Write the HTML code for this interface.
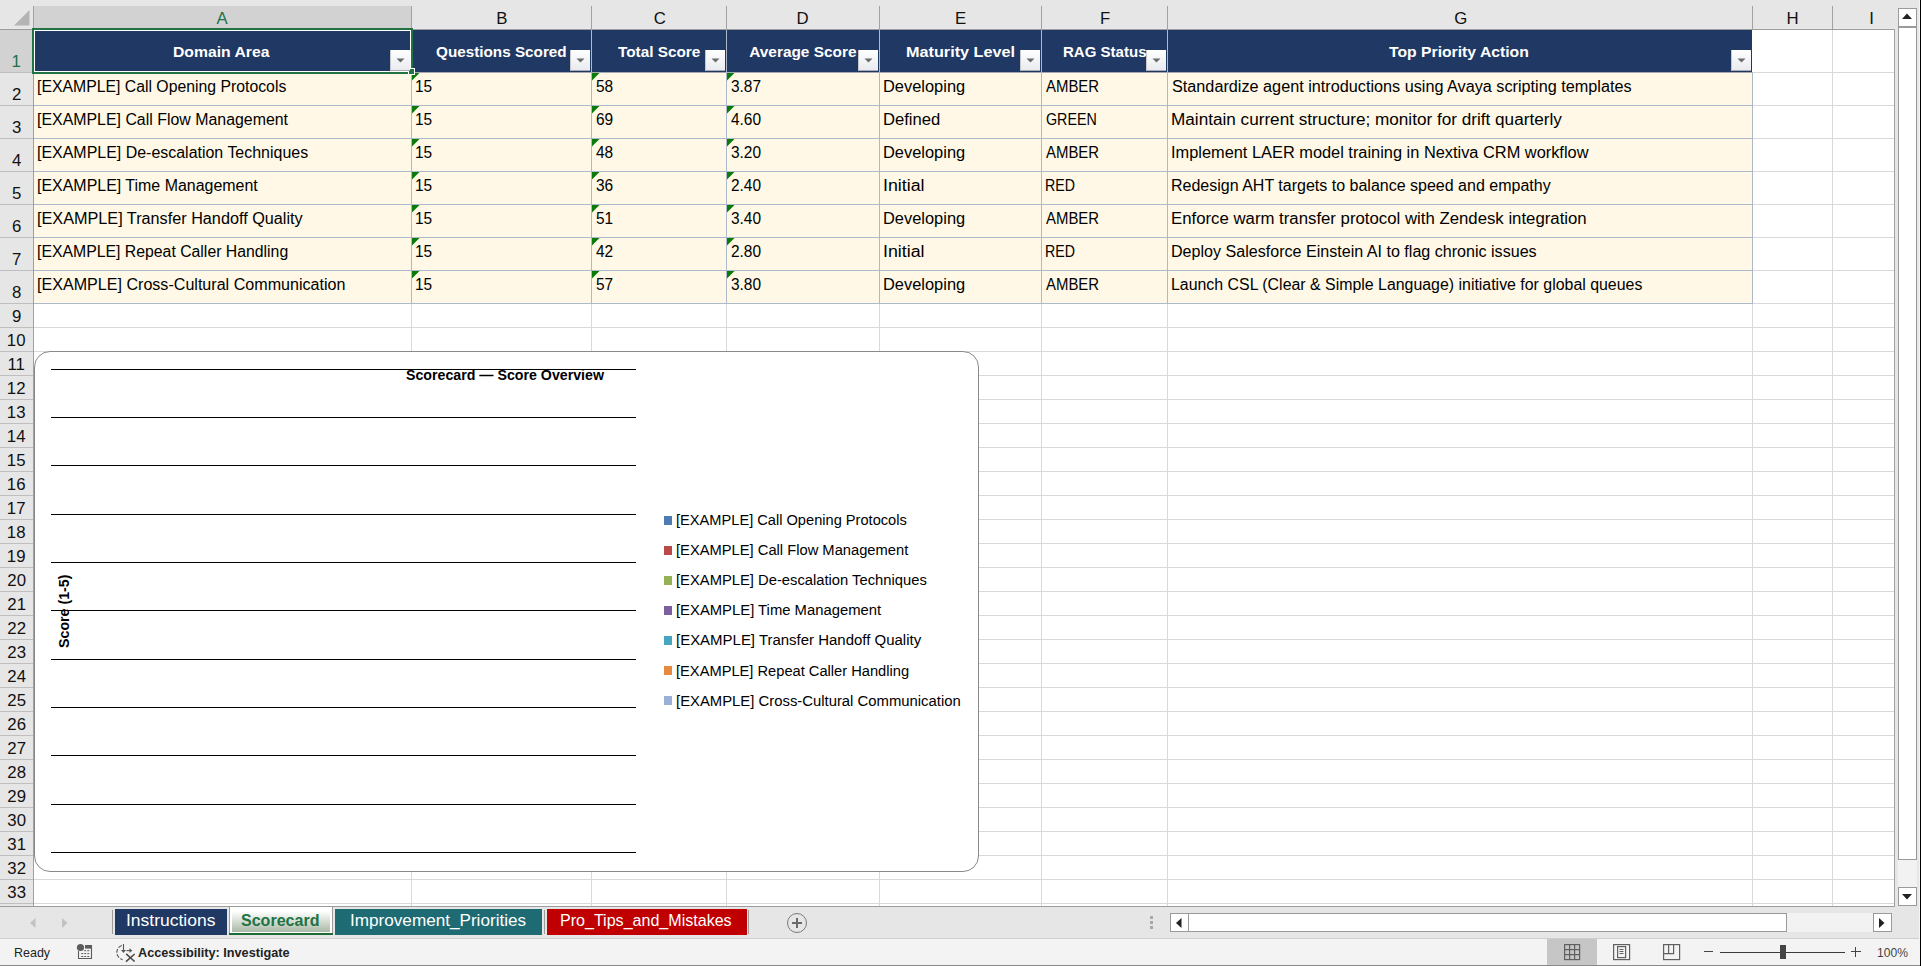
<!DOCTYPE html>
<html><head><meta charset="utf-8"><style>
html,body{margin:0;padding:0;width:1921px;height:966px;overflow:hidden;position:relative;background:#fff}
body{font-family:"Liberation Sans", sans-serif}
.t{position:absolute;white-space:nowrap;line-height:1;transform-origin:0 0}
</style></head><body>
<div style="position:absolute;left:0px;top:0px;width:1921px;height:966px;background:#ffffff;"></div>
<div style="position:absolute;left:0px;top:0px;width:1895px;height:29px;background:#e6e6e6;"></div>
<svg style="position:absolute;left:0;top:0" width="33" height="29"><polygon points="29.5,10 29.5,25.5 14,25.5" fill="#b4b4b4"/></svg>
<div style="position:absolute;left:34px;top:6px;width:377px;height:23px;background:#d2d2d2;"></div>
<div style="position:absolute;left:0px;top:28px;width:1895px;height:1px;background:#e9e9e9;"></div>
<div style="position:absolute;left:0px;top:29px;width:1895px;height:1px;background:#9c9c9c;"></div>
<div style="position:absolute;left:411px;top:6px;width:1px;height:23px;background:#a2a2a2;"></div>
<div style="position:absolute;left:591px;top:6px;width:1px;height:23px;background:#a2a2a2;"></div>
<div style="position:absolute;left:726px;top:6px;width:1px;height:23px;background:#a2a2a2;"></div>
<div style="position:absolute;left:879px;top:6px;width:1px;height:23px;background:#a2a2a2;"></div>
<div style="position:absolute;left:1041px;top:6px;width:1px;height:23px;background:#a2a2a2;"></div>
<div style="position:absolute;left:1167px;top:6px;width:1px;height:23px;background:#a2a2a2;"></div>
<div style="position:absolute;left:1752px;top:6px;width:1px;height:23px;background:#a2a2a2;"></div>
<div style="position:absolute;left:1832px;top:6px;width:1px;height:23px;background:#a2a2a2;"></div>
<div style="position:absolute;left:33px;top:6px;width:1px;height:23px;background:#a2a2a2;"></div>
<div style="position:absolute;left:0px;top:30px;width:33px;height:876px;background:#e6e6e6;"></div>
<div style="position:absolute;left:0px;top:30px;width:33px;height:42px;background:#d2d2d2;"></div>
<div style="position:absolute;left:33px;top:29px;width:1px;height:877px;background:#a0a0a0;"></div>
<div style="position:absolute;left:0px;top:72px;width:33px;height:1px;background:#bfbfbf;"></div>
<div style="position:absolute;left:0px;top:105px;width:33px;height:1px;background:#bfbfbf;"></div>
<div style="position:absolute;left:0px;top:138px;width:33px;height:1px;background:#bfbfbf;"></div>
<div style="position:absolute;left:0px;top:171px;width:33px;height:1px;background:#bfbfbf;"></div>
<div style="position:absolute;left:0px;top:204px;width:33px;height:1px;background:#bfbfbf;"></div>
<div style="position:absolute;left:0px;top:237px;width:33px;height:1px;background:#bfbfbf;"></div>
<div style="position:absolute;left:0px;top:270px;width:33px;height:1px;background:#bfbfbf;"></div>
<div style="position:absolute;left:0px;top:303px;width:33px;height:1px;background:#bfbfbf;"></div>
<div style="position:absolute;left:0px;top:327px;width:33px;height:1px;background:#bfbfbf;"></div>
<div style="position:absolute;left:0px;top:351px;width:33px;height:1px;background:#bfbfbf;"></div>
<div style="position:absolute;left:0px;top:375px;width:33px;height:1px;background:#bfbfbf;"></div>
<div style="position:absolute;left:0px;top:399px;width:33px;height:1px;background:#bfbfbf;"></div>
<div style="position:absolute;left:0px;top:423px;width:33px;height:1px;background:#bfbfbf;"></div>
<div style="position:absolute;left:0px;top:447px;width:33px;height:1px;background:#bfbfbf;"></div>
<div style="position:absolute;left:0px;top:471px;width:33px;height:1px;background:#bfbfbf;"></div>
<div style="position:absolute;left:0px;top:495px;width:33px;height:1px;background:#bfbfbf;"></div>
<div style="position:absolute;left:0px;top:519px;width:33px;height:1px;background:#bfbfbf;"></div>
<div style="position:absolute;left:0px;top:543px;width:33px;height:1px;background:#bfbfbf;"></div>
<div style="position:absolute;left:0px;top:567px;width:33px;height:1px;background:#bfbfbf;"></div>
<div style="position:absolute;left:0px;top:591px;width:33px;height:1px;background:#bfbfbf;"></div>
<div style="position:absolute;left:0px;top:615px;width:33px;height:1px;background:#bfbfbf;"></div>
<div style="position:absolute;left:0px;top:639px;width:33px;height:1px;background:#bfbfbf;"></div>
<div style="position:absolute;left:0px;top:663px;width:33px;height:1px;background:#bfbfbf;"></div>
<div style="position:absolute;left:0px;top:687px;width:33px;height:1px;background:#bfbfbf;"></div>
<div style="position:absolute;left:0px;top:711px;width:33px;height:1px;background:#bfbfbf;"></div>
<div style="position:absolute;left:0px;top:735px;width:33px;height:1px;background:#bfbfbf;"></div>
<div style="position:absolute;left:0px;top:759px;width:33px;height:1px;background:#bfbfbf;"></div>
<div style="position:absolute;left:0px;top:783px;width:33px;height:1px;background:#bfbfbf;"></div>
<div style="position:absolute;left:0px;top:807px;width:33px;height:1px;background:#bfbfbf;"></div>
<div style="position:absolute;left:0px;top:831px;width:33px;height:1px;background:#bfbfbf;"></div>
<div style="position:absolute;left:0px;top:855px;width:33px;height:1px;background:#bfbfbf;"></div>
<div style="position:absolute;left:0px;top:879px;width:33px;height:1px;background:#bfbfbf;"></div>
<div style="position:absolute;left:0px;top:903px;width:33px;height:1px;background:#bfbfbf;"></div>
<div style="position:absolute;left:34px;top:303px;width:1860px;height:1px;background:#d9d9d9;"></div>
<div style="position:absolute;left:34px;top:327px;width:1860px;height:1px;background:#d9d9d9;"></div>
<div style="position:absolute;left:34px;top:351px;width:1860px;height:1px;background:#d9d9d9;"></div>
<div style="position:absolute;left:34px;top:375px;width:1860px;height:1px;background:#d9d9d9;"></div>
<div style="position:absolute;left:34px;top:399px;width:1860px;height:1px;background:#d9d9d9;"></div>
<div style="position:absolute;left:34px;top:423px;width:1860px;height:1px;background:#d9d9d9;"></div>
<div style="position:absolute;left:34px;top:447px;width:1860px;height:1px;background:#d9d9d9;"></div>
<div style="position:absolute;left:34px;top:471px;width:1860px;height:1px;background:#d9d9d9;"></div>
<div style="position:absolute;left:34px;top:495px;width:1860px;height:1px;background:#d9d9d9;"></div>
<div style="position:absolute;left:34px;top:519px;width:1860px;height:1px;background:#d9d9d9;"></div>
<div style="position:absolute;left:34px;top:543px;width:1860px;height:1px;background:#d9d9d9;"></div>
<div style="position:absolute;left:34px;top:567px;width:1860px;height:1px;background:#d9d9d9;"></div>
<div style="position:absolute;left:34px;top:591px;width:1860px;height:1px;background:#d9d9d9;"></div>
<div style="position:absolute;left:34px;top:615px;width:1860px;height:1px;background:#d9d9d9;"></div>
<div style="position:absolute;left:34px;top:639px;width:1860px;height:1px;background:#d9d9d9;"></div>
<div style="position:absolute;left:34px;top:663px;width:1860px;height:1px;background:#d9d9d9;"></div>
<div style="position:absolute;left:34px;top:687px;width:1860px;height:1px;background:#d9d9d9;"></div>
<div style="position:absolute;left:34px;top:711px;width:1860px;height:1px;background:#d9d9d9;"></div>
<div style="position:absolute;left:34px;top:735px;width:1860px;height:1px;background:#d9d9d9;"></div>
<div style="position:absolute;left:34px;top:759px;width:1860px;height:1px;background:#d9d9d9;"></div>
<div style="position:absolute;left:34px;top:783px;width:1860px;height:1px;background:#d9d9d9;"></div>
<div style="position:absolute;left:34px;top:807px;width:1860px;height:1px;background:#d9d9d9;"></div>
<div style="position:absolute;left:34px;top:831px;width:1860px;height:1px;background:#d9d9d9;"></div>
<div style="position:absolute;left:34px;top:855px;width:1860px;height:1px;background:#d9d9d9;"></div>
<div style="position:absolute;left:34px;top:879px;width:1860px;height:1px;background:#d9d9d9;"></div>
<div style="position:absolute;left:34px;top:903px;width:1860px;height:1px;background:#d9d9d9;"></div>
<div style="position:absolute;left:411px;top:304px;width:1px;height:602px;background:#d9d9d9;"></div>
<div style="position:absolute;left:591px;top:304px;width:1px;height:602px;background:#d9d9d9;"></div>
<div style="position:absolute;left:726px;top:304px;width:1px;height:602px;background:#d9d9d9;"></div>
<div style="position:absolute;left:879px;top:304px;width:1px;height:602px;background:#d9d9d9;"></div>
<div style="position:absolute;left:1041px;top:304px;width:1px;height:602px;background:#d9d9d9;"></div>
<div style="position:absolute;left:1167px;top:304px;width:1px;height:602px;background:#d9d9d9;"></div>
<div style="position:absolute;left:1752px;top:304px;width:1px;height:602px;background:#d9d9d9;"></div>
<div style="position:absolute;left:1832px;top:304px;width:1px;height:602px;background:#d9d9d9;"></div>
<div style="position:absolute;left:1753px;top:72px;width:141px;height:1px;background:#d9d9d9;"></div>
<div style="position:absolute;left:1753px;top:105px;width:141px;height:1px;background:#d9d9d9;"></div>
<div style="position:absolute;left:1753px;top:138px;width:141px;height:1px;background:#d9d9d9;"></div>
<div style="position:absolute;left:1753px;top:171px;width:141px;height:1px;background:#d9d9d9;"></div>
<div style="position:absolute;left:1753px;top:204px;width:141px;height:1px;background:#d9d9d9;"></div>
<div style="position:absolute;left:1753px;top:237px;width:141px;height:1px;background:#d9d9d9;"></div>
<div style="position:absolute;left:1753px;top:270px;width:141px;height:1px;background:#d9d9d9;"></div>
<div style="position:absolute;left:1753px;top:303px;width:141px;height:1px;background:#d9d9d9;"></div>
<div style="position:absolute;left:1832px;top:30px;width:1px;height:274px;background:#d9d9d9;"></div>
<div style="position:absolute;left:1894px;top:29px;width:1px;height:877px;background:#a0a0a0;"></div>
<div style="position:absolute;left:34px;top:30px;width:1718px;height:42px;background:#203864;"></div>
<div style="position:absolute;left:591px;top:30px;width:1px;height:42px;background:#aeb8c9;"></div>
<div style="position:absolute;left:726px;top:30px;width:1px;height:42px;background:#aeb8c9;"></div>
<div style="position:absolute;left:879px;top:30px;width:1px;height:42px;background:#aeb8c9;"></div>
<div style="position:absolute;left:1041px;top:30px;width:1px;height:42px;background:#aeb8c9;"></div>
<div style="position:absolute;left:1167px;top:30px;width:1px;height:42px;background:#aeb8c9;"></div>
<div style="position:absolute;left:34px;top:73px;width:1718px;height:230px;background:#fff8e6;"></div>
<div style="position:absolute;left:34px;top:72px;width:1719px;height:1px;background:#acb9ca;"></div>
<div style="position:absolute;left:34px;top:105px;width:1719px;height:1px;background:#acb9ca;"></div>
<div style="position:absolute;left:34px;top:138px;width:1719px;height:1px;background:#acb9ca;"></div>
<div style="position:absolute;left:34px;top:171px;width:1719px;height:1px;background:#acb9ca;"></div>
<div style="position:absolute;left:34px;top:204px;width:1719px;height:1px;background:#acb9ca;"></div>
<div style="position:absolute;left:34px;top:237px;width:1719px;height:1px;background:#acb9ca;"></div>
<div style="position:absolute;left:34px;top:270px;width:1719px;height:1px;background:#acb9ca;"></div>
<div style="position:absolute;left:34px;top:303px;width:1719px;height:1px;background:#acb9ca;"></div>
<div style="position:absolute;left:34px;top:72px;width:1719px;height:1px;background:#a4a8b0;"></div>
<div style="position:absolute;left:411px;top:72px;width:1px;height:232px;background:#acb9ca;"></div>
<div style="position:absolute;left:591px;top:72px;width:1px;height:232px;background:#acb9ca;"></div>
<div style="position:absolute;left:726px;top:72px;width:1px;height:232px;background:#acb9ca;"></div>
<div style="position:absolute;left:879px;top:72px;width:1px;height:232px;background:#acb9ca;"></div>
<div style="position:absolute;left:1041px;top:72px;width:1px;height:232px;background:#acb9ca;"></div>
<div style="position:absolute;left:1167px;top:72px;width:1px;height:232px;background:#acb9ca;"></div>
<div style="position:absolute;left:1752px;top:72px;width:1px;height:232px;background:#acb9ca;"></div>
<div style="position:absolute;z-index:2;left:390px;top:50px;width:19px;height:20px;background:linear-gradient(#ffffff,#e9ebef);border-left:1px solid #c6c8cc;border-bottom:1px solid #a9abaf"></div>
<svg style="position:absolute;z-index:3;left:396px;top:58px" width="9" height="5"><polygon points="0.5,0.5 8.5,0.5 4.5,4.5" fill="#6b6b6b"/></svg>
<div style="position:absolute;z-index:2;left:570px;top:50px;width:19px;height:20px;background:linear-gradient(#ffffff,#e9ebef);border-left:1px solid #c6c8cc;border-bottom:1px solid #a9abaf"></div>
<svg style="position:absolute;z-index:3;left:576px;top:58px" width="9" height="5"><polygon points="0.5,0.5 8.5,0.5 4.5,4.5" fill="#6b6b6b"/></svg>
<div style="position:absolute;z-index:2;left:705px;top:50px;width:19px;height:20px;background:linear-gradient(#ffffff,#e9ebef);border-left:1px solid #c6c8cc;border-bottom:1px solid #a9abaf"></div>
<svg style="position:absolute;z-index:3;left:711px;top:58px" width="9" height="5"><polygon points="0.5,0.5 8.5,0.5 4.5,4.5" fill="#6b6b6b"/></svg>
<div style="position:absolute;z-index:2;left:858px;top:50px;width:19px;height:20px;background:linear-gradient(#ffffff,#e9ebef);border-left:1px solid #c6c8cc;border-bottom:1px solid #a9abaf"></div>
<svg style="position:absolute;z-index:3;left:864px;top:58px" width="9" height="5"><polygon points="0.5,0.5 8.5,0.5 4.5,4.5" fill="#6b6b6b"/></svg>
<div style="position:absolute;z-index:2;left:1020px;top:50px;width:19px;height:20px;background:linear-gradient(#ffffff,#e9ebef);border-left:1px solid #c6c8cc;border-bottom:1px solid #a9abaf"></div>
<svg style="position:absolute;z-index:3;left:1026px;top:58px" width="9" height="5"><polygon points="0.5,0.5 8.5,0.5 4.5,4.5" fill="#6b6b6b"/></svg>
<div style="position:absolute;z-index:2;left:1146px;top:50px;width:19px;height:20px;background:linear-gradient(#ffffff,#e9ebef);border-left:1px solid #c6c8cc;border-bottom:1px solid #a9abaf"></div>
<svg style="position:absolute;z-index:3;left:1152px;top:58px" width="9" height="5"><polygon points="0.5,0.5 8.5,0.5 4.5,4.5" fill="#6b6b6b"/></svg>
<div style="position:absolute;z-index:2;left:1731px;top:50px;width:19px;height:20px;background:linear-gradient(#ffffff,#e9ebef);border-left:1px solid #c6c8cc;border-bottom:1px solid #a9abaf"></div>
<svg style="position:absolute;z-index:3;left:1737px;top:58px" width="9" height="5"><polygon points="0.5,0.5 8.5,0.5 4.5,4.5" fill="#6b6b6b"/></svg>
<svg style="position:absolute;left:412px;top:73px" width="8" height="8"><polygon points="0,0 7.5,0 0,7.5" fill="#0a7a0a"/></svg>
<svg style="position:absolute;left:412px;top:106px" width="8" height="8"><polygon points="0,0 7.5,0 0,7.5" fill="#0a7a0a"/></svg>
<svg style="position:absolute;left:412px;top:139px" width="8" height="8"><polygon points="0,0 7.5,0 0,7.5" fill="#0a7a0a"/></svg>
<svg style="position:absolute;left:412px;top:172px" width="8" height="8"><polygon points="0,0 7.5,0 0,7.5" fill="#0a7a0a"/></svg>
<svg style="position:absolute;left:412px;top:205px" width="8" height="8"><polygon points="0,0 7.5,0 0,7.5" fill="#0a7a0a"/></svg>
<svg style="position:absolute;left:412px;top:238px" width="8" height="8"><polygon points="0,0 7.5,0 0,7.5" fill="#0a7a0a"/></svg>
<svg style="position:absolute;left:412px;top:271px" width="8" height="8"><polygon points="0,0 7.5,0 0,7.5" fill="#0a7a0a"/></svg>
<svg style="position:absolute;left:592px;top:73px" width="8" height="8"><polygon points="0,0 7.5,0 0,7.5" fill="#0a7a0a"/></svg>
<svg style="position:absolute;left:592px;top:106px" width="8" height="8"><polygon points="0,0 7.5,0 0,7.5" fill="#0a7a0a"/></svg>
<svg style="position:absolute;left:592px;top:139px" width="8" height="8"><polygon points="0,0 7.5,0 0,7.5" fill="#0a7a0a"/></svg>
<svg style="position:absolute;left:592px;top:172px" width="8" height="8"><polygon points="0,0 7.5,0 0,7.5" fill="#0a7a0a"/></svg>
<svg style="position:absolute;left:592px;top:205px" width="8" height="8"><polygon points="0,0 7.5,0 0,7.5" fill="#0a7a0a"/></svg>
<svg style="position:absolute;left:592px;top:238px" width="8" height="8"><polygon points="0,0 7.5,0 0,7.5" fill="#0a7a0a"/></svg>
<svg style="position:absolute;left:592px;top:271px" width="8" height="8"><polygon points="0,0 7.5,0 0,7.5" fill="#0a7a0a"/></svg>
<svg style="position:absolute;left:727px;top:73px" width="8" height="8"><polygon points="0,0 7.5,0 0,7.5" fill="#0a7a0a"/></svg>
<svg style="position:absolute;left:727px;top:106px" width="8" height="8"><polygon points="0,0 7.5,0 0,7.5" fill="#0a7a0a"/></svg>
<svg style="position:absolute;left:727px;top:139px" width="8" height="8"><polygon points="0,0 7.5,0 0,7.5" fill="#0a7a0a"/></svg>
<svg style="position:absolute;left:727px;top:172px" width="8" height="8"><polygon points="0,0 7.5,0 0,7.5" fill="#0a7a0a"/></svg>
<svg style="position:absolute;left:727px;top:205px" width="8" height="8"><polygon points="0,0 7.5,0 0,7.5" fill="#0a7a0a"/></svg>
<svg style="position:absolute;left:727px;top:238px" width="8" height="8"><polygon points="0,0 7.5,0 0,7.5" fill="#0a7a0a"/></svg>
<svg style="position:absolute;left:727px;top:271px" width="8" height="8"><polygon points="0,0 7.5,0 0,7.5" fill="#0a7a0a"/></svg>
<div style="position:absolute;left:32px;top:28px;width:381px;height:2px;background:#217346;"></div>
<div style="position:absolute;left:32px;top:72px;width:381px;height:2px;background:#217346;"></div>
<div style="position:absolute;left:32px;top:28px;width:2px;height:46px;background:#217346;"></div>
<div style="position:absolute;left:411px;top:28px;width:2px;height:46px;background:#217346;"></div>
<div style="position:absolute;left:34px;top:30px;width:377px;height:1px;background:#ffffff;"></div>
<div style="position:absolute;left:34px;top:71px;width:377px;height:1px;background:#ffffff;"></div>
<div style="position:absolute;left:34px;top:30px;width:1px;height:42px;background:#ffffff;"></div>
<div style="position:absolute;left:410px;top:30px;width:1px;height:42px;background:#ffffff;"></div>
<div style="position:absolute;left:408px;top:68px;width:7px;height:7px;background:#ffffff;"></div>
<div style="position:absolute;left:409px;top:69px;width:5px;height:5px;background:#217346;"></div>
<div style="position:absolute;left:34px;top:351px;width:943px;height:519px;border:1px solid #898989;border-radius:16px;background:#fff"></div>
<div style="position:absolute;left:51px;top:369px;width:585px;height:1px;background:#000000;"></div>
<div style="position:absolute;left:51px;top:417px;width:585px;height:1px;background:#000000;"></div>
<div style="position:absolute;left:51px;top:465px;width:585px;height:1px;background:#000000;"></div>
<div style="position:absolute;left:51px;top:514px;width:585px;height:1px;background:#000000;"></div>
<div style="position:absolute;left:51px;top:562px;width:585px;height:1px;background:#000000;"></div>
<div style="position:absolute;left:51px;top:610px;width:585px;height:1px;background:#000000;"></div>
<div style="position:absolute;left:51px;top:659px;width:585px;height:1px;background:#000000;"></div>
<div style="position:absolute;left:51px;top:707px;width:585px;height:1px;background:#000000;"></div>
<div style="position:absolute;left:51px;top:755px;width:585px;height:1px;background:#000000;"></div>
<div style="position:absolute;left:51px;top:804px;width:585px;height:1px;background:#000000;"></div>
<div style="position:absolute;left:51px;top:852px;width:585px;height:1px;background:#000000;"></div>
<div style="position:absolute;left:664px;top:516px;width:8px;height:9px;background:#4f7bb5;"></div>
<div style="position:absolute;left:664px;top:546px;width:8px;height:9px;background:#b94a48;"></div>
<div style="position:absolute;left:664px;top:576px;width:8px;height:9px;background:#94b255;"></div>
<div style="position:absolute;left:664px;top:606px;width:8px;height:9px;background:#7b5fa0;"></div>
<div style="position:absolute;left:664px;top:636px;width:8px;height:9px;background:#46a5bf;"></div>
<div style="position:absolute;left:664px;top:666px;width:8px;height:9px;background:#e68a3e;"></div>
<div style="position:absolute;left:664px;top:696px;width:8px;height:9px;background:#9bb0d6;"></div>
<div style="position:absolute;left:1895px;top:0px;width:26px;height:906px;background:#e6e6e6;"></div>
<div style="position:absolute;left:1898px;top:8px;width:17px;height:17px;background:#fff;border:1px solid #9a9a9a"></div>
<svg style="position:absolute;left:1902px;top:13px" width="10" height="6"><polygon points="0,6 10,6 5,0.5" fill="#222"/></svg>
<div style="position:absolute;left:1898px;top:27px;width:17px;height:831px;background:#fff;border:1px solid #9a9a9a"></div>
<div style="position:absolute;left:1898px;top:860px;width:19px;height:27px;background:#f2f2f2;"></div>
<div style="position:absolute;left:1898px;top:887px;width:17px;height:17px;background:#fff;border:1px solid #9a9a9a"></div>
<svg style="position:absolute;left:1902px;top:894px" width="10" height="6"><polygon points="0,0 10,0 5,5.5" fill="#222"/></svg>
<div style="position:absolute;left:1919px;top:0px;width:1px;height:966px;background:#f4f4f4;"></div>
<div style="position:absolute;left:1920px;top:0px;width:1px;height:966px;background:#000000;"></div>
<div style="position:absolute;left:0px;top:906px;width:1919px;height:32px;background:#e6e6e6;"></div>
<div style="position:absolute;left:0px;top:906px;width:1895px;height:1px;background:#9c9c9c;"></div>
<div style="position:absolute;left:0px;top:938px;width:1919px;height:1px;background:#cfcfcf;"></div>
<svg style="position:absolute;left:30px;top:918px" width="6" height="10"><polygon points="5.5,0 5.5,10 0,5" fill="#c2c2c2"/></svg>
<svg style="position:absolute;left:62px;top:918px" width="6" height="10"><polygon points="0,0 0,10 5.5,5" fill="#c2c2c2"/></svg>
<div style="position:absolute;left:112px;top:910px;width:1px;height:24px;background:#9c9c9c;"></div>
<div style="position:absolute;left:115px;top:909px;width:112px;height:26px;background:#203864;"></div>
<div style="position:absolute;left:229px;top:906px;width:104px;height:28px;background:#9c9c9c;"></div>
<div style="position:absolute;left:230px;top:907px;width:102px;height:27px;background:#ffffff;"></div>
<div style="position:absolute;left:232px;top:909px;width:98px;height:23px;background:linear-gradient(#ffffff 10%,#a9b9a6)"></div>
<div style="position:absolute;left:229px;top:933px;width:104px;height:2px;background:#1b6b37;"></div>
<div style="position:absolute;left:335px;top:909px;width:207px;height:26px;background:#1e6b74;"></div>
<div style="position:absolute;left:544px;top:910px;width:1px;height:24px;background:#9c9c9c;"></div>
<div style="position:absolute;left:547px;top:909px;width:200px;height:26px;background:#c00000;"></div>
<div style="position:absolute;left:748px;top:910px;width:1px;height:24px;background:#9c9c9c;"></div>
<div style="position:absolute;left:787px;top:913px;width:18px;height:18px;border:1px solid #7a7a7a;border-radius:50%"></div>
<div style="position:absolute;left:792px;top:922px;width:10px;height:2px;background:#6a6a6a;"></div>
<div style="position:absolute;left:796px;top:918px;width:2px;height:10px;background:#6a6a6a;"></div>
<div style="position:absolute;left:1150px;top:916px;width:3px;height:3px;background:#a8a8a8;"></div>
<div style="position:absolute;left:1150px;top:921px;width:3px;height:3px;background:#a8a8a8;"></div>
<div style="position:absolute;left:1150px;top:926px;width:3px;height:3px;background:#a8a8a8;"></div>
<div style="position:absolute;left:1170px;top:913px;width:703px;height:19px;background:#f2f2f2;"></div>
<div style="position:absolute;left:1170px;top:913px;width:17px;height:17px;background:#fff;border:1px solid #9a9a9a"></div>
<svg style="position:absolute;left:1176px;top:918px" width="6" height="10"><polygon points="5.5,0 5.5,10 0,5" fill="#222"/></svg>
<div style="position:absolute;left:1188px;top:913px;width:597px;height:17px;background:#fff;border:1px solid #9a9a9a"></div>
<div style="position:absolute;left:1873px;top:913px;width:17px;height:17px;background:#fff;border:1px solid #9a9a9a"></div>
<svg style="position:absolute;left:1879px;top:918px" width="6" height="10"><polygon points="0,0 0,10 5.5,5" fill="#222"/></svg>
<div style="position:absolute;left:0px;top:939px;width:1919px;height:26px;background:#f3f3f3;"></div>
<div style="position:absolute;left:0px;top:965px;width:1920px;height:1px;background:#8a8a8a;"></div>
<svg style="position:absolute;left:0;top:0" width="1921" height="966"><circle cx="80.5" cy="947.5" r="3.6" fill="#5c5c5c"/><rect x="85" y="945" width="7" height="3.6" fill="#5c5c5c"/><path d="M78.5,951 V958.5 H91.5 V946" fill="none" stroke="#5c5c5c" stroke-width="1.1"/><g fill="#5c5c5c"><rect x="84.2" y="950.2" width="2" height="1"/><rect x="87.3" y="950.2" width="2" height="1"/><rect x="81.2" y="953.1" width="2" height="1"/><rect x="84.2" y="953.1" width="2" height="1"/><rect x="87.3" y="953.1" width="2" height="1"/><rect x="81.2" y="956" width="2" height="1"/><rect x="84.2" y="956" width="2" height="1"/><rect x="87.3" y="956" width="2" height="1"/></g><path d="M121.8,945.4 A7.4,7.4 0 0 0 122.6,959.6" fill="none" stroke="#555" stroke-width="1.1" stroke-dasharray="4,1.4"/><path d="M123.5,944 V951" stroke="#555" stroke-width="1.1"/><polygon points="121,950 126,950 123.5,953" fill="#555"/><path d="M126.5,950.6 H130" stroke="#555" stroke-width="1.1"/><polygon points="129.5,948.2 132.3,950.6 129.5,953" fill="#555"/><path d="M126.2,953.8 L134.6,961.5" stroke="#4a4a4a" stroke-width="1.6"/><path d="M126,961.6 L134.6,954" stroke="#4a4a4a" stroke-width="1.6"/></svg>
<div style="position:absolute;left:1547px;top:939px;width:50px;height:26px;background:#c6c6c6;"></div>
<svg style="position:absolute;left:1564px;top:944px" width="17" height="17"><g fill="none" stroke="#606060" stroke-width="1.2"><rect x="0.6" y="0.6" width="15" height="15"/><path d="M5.6,0.6V15.6M10.6,0.6V15.6M0.6,5.6H15.6M0.6,10.6H15.6"/></g></svg>
<svg style="position:absolute;left:1613px;top:944px" width="18" height="17"><g fill="none" stroke="#606060" stroke-width="1.2"><rect x="0.6" y="0.6" width="16" height="15"/><rect x="4.6" y="2.6" width="8" height="11"/><path d="M6.5,5.5H10.5M6.5,7.5H10.5M6.5,9.5H10.5"/></g></svg>
<svg style="position:absolute;left:1663px;top:944px" width="18" height="17"><g fill="none" stroke="#606060" stroke-width="1.2"><rect x="0.6" y="0.6" width="16" height="15"/><path d="M5.6,0.6V9.6M10.6,0.6V9.6H0.6"/></g></svg>
<div style="position:absolute;left:1704px;top:951px;width:9px;height:1px;background:#444;"></div>
<div style="position:absolute;left:1720px;top:952px;width:125px;height:1px;background:#3a3a3a;"></div>
<div style="position:absolute;left:1780px;top:945px;width:6px;height:14px;background:#444;"></div>
<div style="position:absolute;left:1851px;top:951px;width:10px;height:1px;background:#444;"></div>
<div style="position:absolute;left:1855px;top:947px;width:1px;height:10px;background:#444;"></div>
<div class="t" style="left:676.05px;top:511.96px;font-size:15.4px;color:#000;transform:scaleX(0.9499);">[EXAMPLE] Call Opening Protocols</div>
<div class="t" style="left:676.04px;top:541.96px;font-size:15.4px;color:#000;transform:scaleX(0.9561);">[EXAMPLE] Call Flow Management</div>
<div class="t" style="left:676.04px;top:571.96px;font-size:15.4px;color:#000;transform:scaleX(0.9591);">[EXAMPLE] De-escalation Techniques</div>
<div class="t" style="left:676.04px;top:601.96px;font-size:15.4px;color:#000;transform:scaleX(0.9629);">[EXAMPLE] Time Management</div>
<div class="t" style="left:676.03px;top:631.96px;font-size:15.4px;color:#000;transform:scaleX(0.9724);">[EXAMPLE] Transfer Handoff Quality</div>
<div class="t" style="left:676.05px;top:662.96px;font-size:15.4px;color:#000;transform:scaleX(0.9527);">[EXAMPLE] Repeat Caller Handling</div>
<div class="t" style="left:676.04px;top:692.96px;font-size:15.4px;color:#000;transform:scaleX(0.9648);">[EXAMPLE] Cross-Cultural Communication</div>
<div class="t" style="left:57.06px;top:647.60px;font-size:14.7px;color:#000;font-weight:bold;transform:rotate(-90deg) scaleX(0.9682)">Score (1-5)</div>
<div class="t" style="left:406.00px;top:367.56px;font-size:14.7px;color:#000;font-weight:bold;transform:scaleX(0.9660);">Scorecard — Score Overview</div>
<div class="t" style="left:216.50px;top:11.28px;font-size:16.8px;color:#217346;">A</div>
<div class="t" style="left:496.20px;top:11.28px;font-size:16.8px;color:#111;">B</div>
<div class="t" style="left:653.70px;top:11.28px;font-size:16.8px;color:#111;">C</div>
<div class="t" style="left:796.60px;top:11.28px;font-size:16.8px;color:#111;">D</div>
<div class="t" style="left:954.90px;top:11.28px;font-size:16.8px;color:#111;">E</div>
<div class="t" style="left:1099.90px;top:11.28px;font-size:16.8px;color:#111;">F</div>
<div class="t" style="left:1454.30px;top:11.28px;font-size:16.8px;color:#111;">G</div>
<div class="t" style="left:1786.50px;top:11.28px;font-size:16.8px;color:#111;">H</div>
<div class="t" style="left:1869.30px;top:11.28px;font-size:16.8px;color:#111;">I</div>
<div class="t" style="left:11.50px;top:53.78px;font-size:16.8px;color:#217346;">1</div>
<div class="t" style="left:12.00px;top:86.78px;font-size:16.8px;color:#111;">2</div>
<div class="t" style="left:12.00px;top:119.78px;font-size:16.8px;color:#111;">3</div>
<div class="t" style="left:12.00px;top:152.78px;font-size:16.8px;color:#111;">4</div>
<div class="t" style="left:12.00px;top:185.78px;font-size:16.8px;color:#111;">5</div>
<div class="t" style="left:12.00px;top:218.78px;font-size:16.8px;color:#111;">6</div>
<div class="t" style="left:12.00px;top:251.78px;font-size:16.8px;color:#111;">7</div>
<div class="t" style="left:12.00px;top:284.78px;font-size:16.8px;color:#111;">8</div>
<div class="t" style="left:12.00px;top:308.78px;font-size:16.8px;color:#111;">9</div>
<div class="t" style="left:6.83px;top:332.78px;font-size:16.8px;color:#111;">10</div>
<div class="t" style="left:7.46px;top:356.78px;font-size:16.8px;color:#111;">11</div>
<div class="t" style="left:6.83px;top:380.78px;font-size:16.8px;color:#111;">12</div>
<div class="t" style="left:6.83px;top:404.78px;font-size:16.8px;color:#111;">13</div>
<div class="t" style="left:6.83px;top:428.78px;font-size:16.8px;color:#111;">14</div>
<div class="t" style="left:6.83px;top:452.78px;font-size:16.8px;color:#111;">15</div>
<div class="t" style="left:6.83px;top:476.78px;font-size:16.8px;color:#111;">16</div>
<div class="t" style="left:6.83px;top:500.78px;font-size:16.8px;color:#111;">17</div>
<div class="t" style="left:6.83px;top:524.78px;font-size:16.8px;color:#111;">18</div>
<div class="t" style="left:6.83px;top:548.78px;font-size:16.8px;color:#111;">19</div>
<div class="t" style="left:7.33px;top:572.78px;font-size:16.8px;color:#111;">20</div>
<div class="t" style="left:7.33px;top:596.78px;font-size:16.8px;color:#111;">21</div>
<div class="t" style="left:7.33px;top:620.78px;font-size:16.8px;color:#111;">22</div>
<div class="t" style="left:7.33px;top:644.78px;font-size:16.8px;color:#111;">23</div>
<div class="t" style="left:7.33px;top:668.78px;font-size:16.8px;color:#111;">24</div>
<div class="t" style="left:7.33px;top:692.78px;font-size:16.8px;color:#111;">25</div>
<div class="t" style="left:7.33px;top:716.78px;font-size:16.8px;color:#111;">26</div>
<div class="t" style="left:7.33px;top:740.78px;font-size:16.8px;color:#111;">27</div>
<div class="t" style="left:7.33px;top:764.78px;font-size:16.8px;color:#111;">28</div>
<div class="t" style="left:7.33px;top:788.78px;font-size:16.8px;color:#111;">29</div>
<div class="t" style="left:7.33px;top:812.78px;font-size:16.8px;color:#111;">30</div>
<div class="t" style="left:7.33px;top:836.78px;font-size:16.8px;color:#111;">31</div>
<div class="t" style="left:7.33px;top:860.78px;font-size:16.8px;color:#111;">32</div>
<div class="t" style="left:7.33px;top:884.78px;font-size:16.8px;color:#111;">33</div>
<div class="t" style="left:172.88px;top:43.96px;font-size:15.4px;color:#ffffff;font-weight:bold;transform:scaleX(1.0214);">Domain Area</div>
<div class="t" style="left:436.25px;top:43.96px;font-size:15.4px;color:#ffffff;font-weight:bold;transform:scaleX(0.9923);">Questions Scored</div>
<div class="t" style="left:617.80px;top:43.96px;font-size:15.4px;color:#ffffff;font-weight:bold;transform:scaleX(0.9962);">Total Score</div>
<div class="t" style="left:749.25px;top:43.96px;font-size:15.4px;color:#ffffff;font-weight:bold;">Average Score</div>
<div class="t" style="left:905.90px;top:43.96px;font-size:15.4px;color:#ffffff;font-weight:bold;transform:scaleX(1.0537);">Maturity Level</div>
<div class="t" style="left:1062.52px;top:43.96px;font-size:15.4px;color:#ffffff;font-weight:bold;transform:scaleX(0.9767);">RAG Status</div>
<div class="t" style="left:1389.20px;top:43.96px;font-size:15.4px;color:#ffffff;font-weight:bold;transform:scaleX(1.0221);">Top Priority Action</div>
<div class="t" style="left:36.99px;top:78.59px;font-size:15.6px;color:#000;transform:scaleX(1.0128);">[EXAMPLE] Call Opening Protocols</div>
<div class="t" style="left:414.61px;top:78.59px;font-size:15.6px;color:#000;transform:scaleX(0.9900);">15</div>
<div class="t" style="left:595.50px;top:78.59px;font-size:15.6px;color:#000;transform:scaleX(0.9900);">58</div>
<div class="t" style="left:730.50px;top:78.59px;font-size:15.6px;color:#000;transform:scaleX(0.9900);">3.87</div>
<div class="t" style="left:882.95px;top:78.59px;font-size:15.6px;color:#000;transform:scaleX(1.0531);">Developing</div>
<div class="t" style="left:1045.50px;top:78.59px;font-size:15.6px;color:#000;transform:scaleX(0.9567);">AMBER</div>
<div class="t" style="left:1171.70px;top:78.59px;font-size:15.6px;color:#000;transform:scaleX(1.0403);">Standardize agent introductions using Avaya scripting templates</div>
<div class="t" style="left:36.98px;top:111.59px;font-size:15.6px;color:#000;transform:scaleX(1.0199);">[EXAMPLE] Call Flow Management</div>
<div class="t" style="left:414.61px;top:111.59px;font-size:15.6px;color:#000;transform:scaleX(0.9900);">15</div>
<div class="t" style="left:595.50px;top:111.59px;font-size:15.6px;color:#000;transform:scaleX(0.9900);">69</div>
<div class="t" style="left:730.50px;top:111.59px;font-size:15.6px;color:#000;transform:scaleX(0.9900);">4.60</div>
<div class="t" style="left:882.93px;top:111.59px;font-size:15.6px;color:#000;transform:scaleX(1.0658);">Defined</div>
<div class="t" style="left:1045.50px;top:111.59px;font-size:15.6px;color:#000;transform:scaleX(0.9171);">GREEN</div>
<div class="t" style="left:1170.60px;top:111.59px;font-size:15.6px;color:#000;transform:scaleX(1.0998);">Maintain current structure; monitor for drift quarterly</div>
<div class="t" style="left:36.98px;top:144.59px;font-size:15.6px;color:#000;transform:scaleX(1.0233);">[EXAMPLE] De-escalation Techniques</div>
<div class="t" style="left:414.61px;top:144.59px;font-size:15.6px;color:#000;transform:scaleX(0.9900);">15</div>
<div class="t" style="left:595.50px;top:144.59px;font-size:15.6px;color:#000;transform:scaleX(0.9900);">48</div>
<div class="t" style="left:730.50px;top:144.59px;font-size:15.6px;color:#000;transform:scaleX(0.9900);">3.20</div>
<div class="t" style="left:882.95px;top:144.59px;font-size:15.6px;color:#000;transform:scaleX(1.0531);">Developing</div>
<div class="t" style="left:1045.50px;top:144.59px;font-size:15.6px;color:#000;transform:scaleX(0.9567);">AMBER</div>
<div class="t" style="left:1170.65px;top:144.59px;font-size:15.6px;color:#000;transform:scaleX(1.0495);">Implement LAER model training in Nextiva CRM workflow</div>
<div class="t" style="left:36.98px;top:177.59px;font-size:15.6px;color:#000;transform:scaleX(1.0229);">[EXAMPLE] Time Management</div>
<div class="t" style="left:414.61px;top:177.59px;font-size:15.6px;color:#000;transform:scaleX(0.9900);">15</div>
<div class="t" style="left:595.50px;top:177.59px;font-size:15.6px;color:#000;transform:scaleX(0.9900);">36</div>
<div class="t" style="left:730.50px;top:177.59px;font-size:15.6px;color:#000;transform:scaleX(0.9900);">2.40</div>
<div class="t" style="left:882.86px;top:177.59px;font-size:15.6px;color:#000;transform:scaleX(1.1420);">Initial</div>
<div class="t" style="left:1044.59px;top:177.59px;font-size:15.6px;color:#000;transform:scaleX(0.9096);">RED</div>
<div class="t" style="left:1170.67px;top:177.59px;font-size:15.6px;color:#000;transform:scaleX(1.0264);">Redesign AHT targets to balance speed and empathy</div>
<div class="t" style="left:36.96px;top:210.59px;font-size:15.6px;color:#000;transform:scaleX(1.0401);">[EXAMPLE] Transfer Handoff Quality</div>
<div class="t" style="left:414.61px;top:210.59px;font-size:15.6px;color:#000;transform:scaleX(0.9900);">15</div>
<div class="t" style="left:595.50px;top:210.59px;font-size:15.6px;color:#000;transform:scaleX(0.9900);">51</div>
<div class="t" style="left:730.50px;top:210.59px;font-size:15.6px;color:#000;transform:scaleX(0.9900);">3.40</div>
<div class="t" style="left:882.95px;top:210.59px;font-size:15.6px;color:#000;transform:scaleX(1.0531);">Developing</div>
<div class="t" style="left:1045.50px;top:210.59px;font-size:15.6px;color:#000;transform:scaleX(0.9567);">AMBER</div>
<div class="t" style="left:1170.62px;top:210.59px;font-size:15.6px;color:#000;transform:scaleX(1.0754);">Enforce warm transfer protocol with Zendesk integration</div>
<div class="t" style="left:36.99px;top:243.59px;font-size:15.6px;color:#000;transform:scaleX(1.0133);">[EXAMPLE] Repeat Caller Handling</div>
<div class="t" style="left:414.61px;top:243.59px;font-size:15.6px;color:#000;transform:scaleX(0.9900);">15</div>
<div class="t" style="left:595.50px;top:243.59px;font-size:15.6px;color:#000;transform:scaleX(0.9900);">42</div>
<div class="t" style="left:730.50px;top:243.59px;font-size:15.6px;color:#000;transform:scaleX(0.9900);">2.80</div>
<div class="t" style="left:882.86px;top:243.59px;font-size:15.6px;color:#000;transform:scaleX(1.1420);">Initial</div>
<div class="t" style="left:1044.59px;top:243.59px;font-size:15.6px;color:#000;transform:scaleX(0.9096);">RED</div>
<div class="t" style="left:1170.67px;top:243.59px;font-size:15.6px;color:#000;transform:scaleX(1.0314);">Deploy Salesforce Einstein AI to flag chronic issues</div>
<div class="t" style="left:36.97px;top:276.59px;font-size:15.6px;color:#000;transform:scaleX(1.0316);">[EXAMPLE] Cross-Cultural Communication</div>
<div class="t" style="left:414.61px;top:276.59px;font-size:15.6px;color:#000;transform:scaleX(0.9900);">15</div>
<div class="t" style="left:595.50px;top:276.59px;font-size:15.6px;color:#000;transform:scaleX(0.9900);">57</div>
<div class="t" style="left:730.50px;top:276.59px;font-size:15.6px;color:#000;transform:scaleX(0.9900);">3.80</div>
<div class="t" style="left:882.95px;top:276.59px;font-size:15.6px;color:#000;transform:scaleX(1.0531);">Developing</div>
<div class="t" style="left:1045.50px;top:276.59px;font-size:15.6px;color:#000;transform:scaleX(0.9567);">AMBER</div>
<div class="t" style="left:1170.68px;top:276.59px;font-size:15.6px;color:#000;transform:scaleX(1.0195);">Launch CSL (Clear &amp; Simple Language) initiative for global queues</div>
<div class="t" style="left:125.96px;top:912.78px;font-size:16.8px;color:#ffffff;transform:scaleX(1.0424);">Instructions</div>
<div class="t" style="left:241.45px;top:911.80px;font-size:16.3px;color:#217346;font-weight:bold;transform:scaleX(0.9848);">Scorecard</div>
<div class="t" style="left:350.13px;top:912.58px;font-size:16.8px;color:#ffffff;transform:scaleX(1.0208);">Improvement_Priorities</div>
<div class="t" style="left:560.39px;top:912.58px;font-size:16.8px;color:#ffffff;transform:scaleX(0.9567);">Pro_Tips_and_Mistakes</div>
<div class="t" style="left:13.68px;top:945.57px;font-size:13.5px;color:#222;transform:scaleX(0.9249);">Ready</div>
<div class="t" style="left:138.00px;top:945.57px;font-size:13.5px;color:#222;font-weight:bold;transform:scaleX(0.9394);">Accessibility: Investigate</div>
<div class="t" style="left:1877.11px;top:945.57px;font-size:13.5px;color:#444;transform:scaleX(0.8949);">100%</div>
</body></html>
